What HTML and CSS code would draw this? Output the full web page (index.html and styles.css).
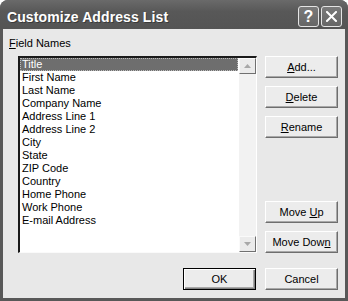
FILE: index.html
```html
<!DOCTYPE html>
<html lang="en">
<head>
<meta charset="UTF-8">
<title>Customize Address List</title>
<link rel="stylesheet" href="styles.css">
</head>
<body>
<div class="window">
  <div class="titlebar">
    <span class="title">Customize Address List</span>
    <div class="caption-buttons">
      <div class="cap-btn help">?</div>
      <div class="cap-btn close">
        <svg width="11" height="11" viewBox="0 0 11 11">
          <path d="M1 1 L10 10 M10 1 L1 10" stroke="#fff" stroke-width="2" stroke-linecap="square"/>
        </svg>
      </div>
    </div>
  </div>

  <div class="client">
    <div class="label"><u>F</u>ield Names</div>

    <div class="main">
      <div class="listbox">
        <ul class="items">
          <li class="selected">Title</li>
          <li>First Name</li>
          <li>Last Name</li>
          <li>Company Name</li>
          <li>Address Line 1</li>
          <li>Address Line 2</li>
          <li>City</li>
          <li>State</li>
          <li>ZIP Code</li>
          <li>Country</li>
          <li>Home Phone</li>
          <li>Work Phone</li>
          <li>E-mail Address</li>
        </ul>
        <div class="scrollbar">
          <div class="arrow"><svg width="7" height="4" viewBox="0 0 7 4"><path d="M3.5 0 L7 4 L0 4 Z" fill="#a8a8a8"/></svg></div>
          <div class="track"></div>
          <div class="arrow"><svg width="7" height="4" viewBox="0 0 7 4"><path d="M0 0 L7 0 L3.5 4 Z" fill="#a8a8a8"/></svg></div>
        </div>
      </div>

      <div class="side">
        <div class="group">
          <button type="button"><u>A</u>dd...</button>
          <button type="button"><u>D</u>elete</button>
          <button type="button"><u>R</u>ename</button>
        </div>
        <div class="group">
          <button type="button">Move <u>U</u>p</button>
          <button type="button">Move Dow<u>n</u></button>
        </div>
      </div>
    </div>

    <div class="footer">
      <button type="button" class="ok">OK</button>
      <button type="button">Cancel</button>
    </div>
  </div>
</div>
</body>
</html>
```

FILE: styles.css
```css
body {
  margin: 0;
  font-family: "Liberation Sans", Arial, sans-serif;
  font-size: 11px;
  color: #000;
  background: #fff;
}

.window {
  width: 348px;
  height: 301px;
  box-sizing: border-box;
  background: #585858;
  border-radius: 8px 8px 0 0;
  padding: 0 3px 3px 3px;
  display: flex;
  flex-direction: column;
}

.titlebar {
  height: 29px;
  box-sizing: border-box;
  display: flex;
  align-items: flex-start;
  justify-content: space-between;
  background: linear-gradient(#6a6a6a, #585858 40%, #545454);
  border-radius: 8px 8px 0 0;
  margin: 0 -3px;
  padding: 6px 6px 0 7px;
}

.title {
  color: #fff;
  font-weight: bold;
  font-size: 14px;
  letter-spacing: 0.1px;
  text-shadow: 1px 1px 0 #3a3a3a;
  margin-top: 3px;
}

.caption-buttons {
  display: flex;
  gap: 2px;
}

.cap-btn {
  width: 19px;
  height: 19px;
  border: 1px solid #e4e4e4;
  border-radius: 3px;
  background: linear-gradient(#7a7a7a, #666);
  color: #fff;
  display: flex;
  align-items: center;
  justify-content: center;
  font-weight: bold;
  font-size: 16px;
}

.client {
  flex: 1;
  background: #e8e8e8;
  padding: 8px 7px 0 6px;
  display: flex;
  flex-direction: column;
}

.label {
  height: 13px;
  line-height: 13px;
}

.main {
  display: flex;
  margin-top: 6px;
  margin-left: 9px;
  gap: 8px;
}

.listbox {
  width: 239px;
  height: 197px;
  box-sizing: border-box;
  border-top: 2px solid #1a1a1a;
  border-left: 2px solid #1a1a1a;
  border-right: 1px solid #fff;
  border-bottom: 1px solid #fafafa;
  background: #fff;
  display: flex;
}

.items {
  flex: 1;
  list-style: none;
  margin: 0;
  padding: 0;
}

.items li {
  height: 13px;
  line-height: 13px;
  padding-left: 2px;
}

.items li.selected {
  background: #6e6e6e;
  color: #fff;
  outline: 1px dotted #bbb;
  outline-offset: -1px;
}

.scrollbar {
  width: 17px;
  background: #f2f2f2;
  display: flex;
  flex-direction: column;
  border-left: 1px solid #fff;
}

.scrollbar .arrow {
  height: 16px;
  box-sizing: border-box;
  border: 1px solid #fafafa;
  border-right-color: #707070;
  border-bottom-color: #707070;
  background: #ebebeb;
  display: flex;
  align-items: center;
  justify-content: center;
}

.scrollbar .track {
  flex: 1;
}

.side {
  width: 73px;
  display: flex;
  flex-direction: column;
  justify-content: space-between;
}

.group {
  display: flex;
  flex-direction: column;
  gap: 8px;
}

button {
  width: 73px;
  height: 22px;
  padding: 0;
  font-family: inherit;
  font-size: 11px;
  color: #000;
  background: #ececec;
  border: 1px solid #fff;
  border-right-color: #6e6e6e;
  border-bottom-color: #6e6e6e;
  box-shadow: inset -1px -1px 0 #a8a8a8;
}

.footer {
  display: flex;
  justify-content: flex-end;
  gap: 9px;
  margin-top: 15px;
}

.footer .ok {
  border: 1px solid #000;
  box-shadow: inset 1px 1px 0 #fff, inset -1px -1px 0 #808080, inset -2px -2px 0 #a8a8a8;
}
```
